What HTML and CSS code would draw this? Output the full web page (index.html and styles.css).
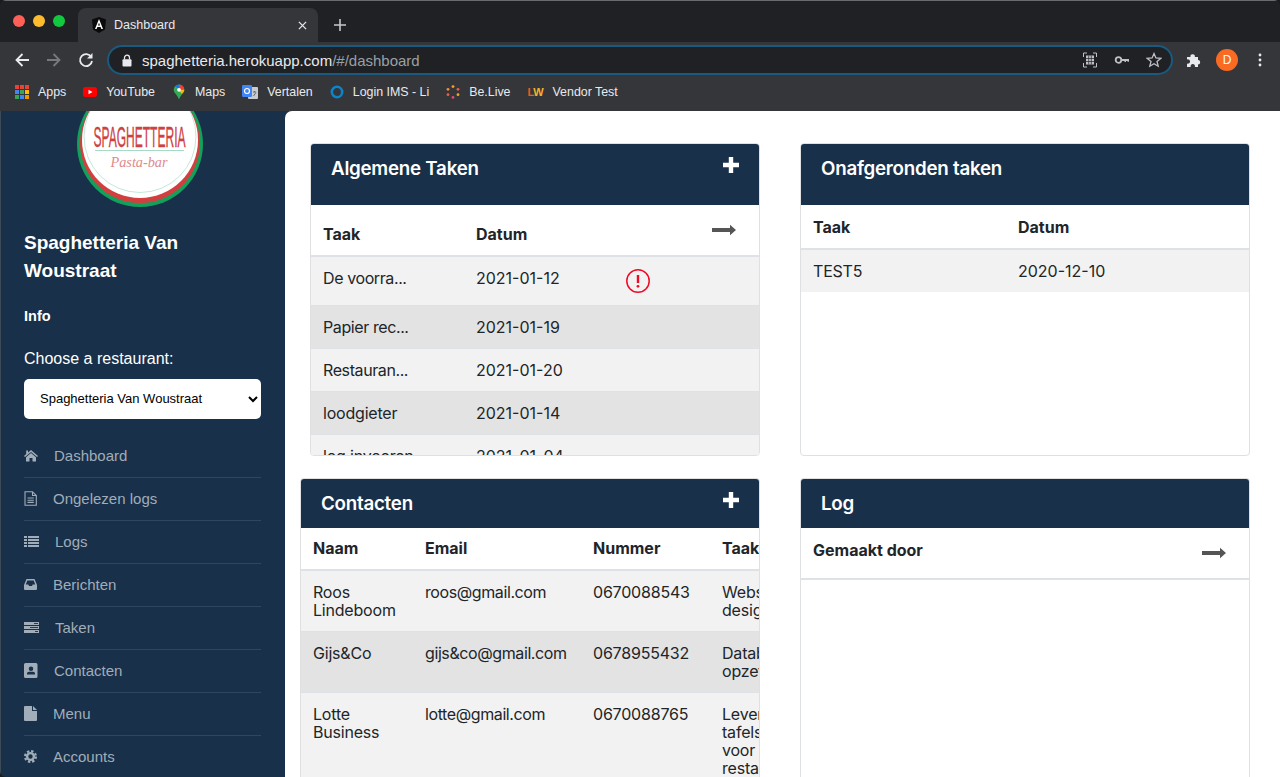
FILE: index.html
```html
<!DOCTYPE html>
<html lang="en">
<head>
<meta charset="utf-8">
<title>Dashboard</title>
<link rel="stylesheet" href="styles.css">
</head>
<body>
<div class="window">
  <div class="tabstrip">
    <div class="lights"><span class="light red"></span><span class="light yellow"></span><span class="light green"></span></div>
    <div class="tab">
      <svg class="favicon" viewBox="0 0 14 16"><polygon points="7,0 14,2.5 13,12.5 7,16 1,12.5 0,2.5" fill="#0a0a0a"/><path d="M7 2 L11 12 H9.4 L8.6 10 H5.4 L4.6 12 H3 Z M6 8.5 H8 L7 5.8 Z" fill="#fff" fill-rule="evenodd"/></svg>
      <span class="tab-title">Dashboard</span>
      <svg class="tab-close" viewBox="0 0 10 10"><path d="M1 1 L9 9 M9 1 L1 9" stroke="#e8eaed" stroke-width="1.4"/></svg>
    </div>
    <svg class="newtab" viewBox="0 0 14 14"><path d="M7 1 V13 M1 7 H13" stroke="#c4c7cc" stroke-width="1.6"/></svg>
  </div>
  <div class="toolbar">
    <svg class="tool tool-back" viewBox="0 0 16 16"><path d="M15 8 H2.5 M8.5 2 L2.5 8 L8.5 14" fill="none" stroke="#e8eaed" stroke-width="1.8"/></svg>
    <svg class="tool tool-fwd" viewBox="0 0 16 16"><path d="M1 8 H13.5 M7.5 2 L13.5 8 L7.5 14" fill="none" stroke="#77797d" stroke-width="1.8"/></svg>
    <svg class="tool tool-reload" viewBox="0 0 16 16"><path d="M13.2 5 A6 6 0 1 0 14 9" fill="none" stroke="#e8eaed" stroke-width="1.8"/><path d="M14.5 1 V6.5 H9 Z" fill="#e8eaed"/></svg>
    <div class="omnibox">
      <svg class="lock" viewBox="0 0 10 13"><path d="M2.5 5.5 V3.7 A2.5 2.5 0 0 1 7.5 3.7 V5.5" fill="none" stroke="#e8eaed" stroke-width="1.3"/><rect x="0.5" y="5.2" width="9" height="7.3" rx="1" fill="#e8eaed"/></svg>
      <span class="url"><span class="url-host">spaghetteria.herokuapp.com</span><span class="url-path">/#/dashboard</span></span>
      <svg class="omni-icon" viewBox="0 0 16 16"><path d="M5 1 H1.5 V5 M11 1 H14.5 V5 M5 15 H1.5 V11 M11 15 H14.5 V11" fill="none" stroke="#bdc1c6" stroke-width="1"/><rect x="4" y="3.5" width="8" height="9" fill="#bdc1c6"/><path d="M4 6.5 H12 M4 9.5 H12 M6.7 3.5 V12.5 M9.3 3.5 V12.5" stroke="#202124" stroke-width=".7"/></svg>
      <svg class="omni-icon" viewBox="0 0 16 16"><circle cx="4.5" cy="8" r="2.8" fill="none" stroke="#bdc1c6" stroke-width="1.8"/><path d="M7 7 H15 V9.8 H13.5 V9 H12 V10 H10.5 V9 H7 Z" fill="#bdc1c6"/></svg>
      <svg class="omni-icon" viewBox="0 0 16 16"><path d="M8 1.6 L9.9 6 L14.7 6.4 L11 9.5 L12.2 14.2 L8 11.7 L3.8 14.2 L5 9.5 L1.3 6.4 L6.1 6 Z" fill="none" stroke="#bdc1c6" stroke-width="1.3"/></svg>
    </div>
    <svg class="tool tool-ext" viewBox="0 0 16 16"><path d="M1 5 H4.5 A2.2 2.2 0 1 1 8.8 5 H12 V8 A2.2 2.2 0 1 1 12 12.4 V15 H8.8 A2.2 2.2 0 1 0 4.8 15 H1 V11.5 A2.2 2.2 0 1 0 1 7.5 Z" fill="#e8eaed"/></svg>
    <span class="avatar">D</span>
    <svg class="tool tool-menu" viewBox="0 0 4 16"><circle cx="2" cy="3" r="1.4" fill="#e8eaed"/><circle cx="2" cy="8" r="1.4" fill="#e8eaed"/><circle cx="2" cy="13" r="1.4" fill="#e8eaed"/></svg>
  </div>
  <div class="bookmarks">
    <a class="bm">
      <svg class="bm-icon" viewBox="0 0 14 14"><rect width="4" height="4" fill="#ea4335"/><rect x="5" width="4" height="4" fill="#ea4335"/><rect x="10" width="4" height="4" fill="#ea4335"/><rect y="5" width="4" height="4" fill="#4285f4"/><rect x="5" y="5" width="4" height="4" fill="#34a853"/><rect x="10" y="5" width="4" height="4" fill="#fbbc05"/><rect y="10" width="4" height="4" fill="#34a853"/><rect x="5" y="10" width="4" height="4" fill="#4285f4"/><rect x="10" y="10" width="4" height="4" fill="#f29900"/></svg>
      <span>Apps</span>
    </a>
    <a class="bm">
      <svg class="bm-icon" viewBox="0 0 14 14"><rect y="2" width="14" height="10" rx="2.5" fill="#f00"/><path d="M5.5 4.8 L9.5 7 L5.5 9.2 Z" fill="#fff"/></svg>
      <span>YouTube</span>
    </a>
    <a class="bm">
      <svg class="bm-icon bm-tall" viewBox="0 0 14 16"><path d="M7 0.5 A5.3 5.3 0 0 1 12.3 5.8 C12.3 9 8.5 11 7 15.5 C5.5 11 1.7 9 1.7 5.8 A5.3 5.3 0 0 1 7 0.5 Z" fill="#34a853"/><path d="M3 2.2 A5.3 5.3 0 0 1 7 0.5 L7 5 Z" fill="#1a73e8"/><path d="M7 0.5 A5.3 5.3 0 0 1 12.3 5.8 L7 5.5 Z" fill="#ea4335"/><path d="M12.3 5.8 C12.3 7.5 11 8.7 9.8 10 L7 6 Z" fill="#fbbc05"/><circle cx="7" cy="5.8" r="1.9" fill="#fff"/></svg>
      <span>Maps</span>
    </a>
    <a class="bm">
      <svg class="bm-icon bm-wide" viewBox="0 0 16 16"><rect x="6" y="3" width="10" height="12" rx="1" fill="#c7ccd1"/><rect y="1" width="10" height="12" rx="1.2" fill="#4285f4"/><circle cx="5" cy="7" r="2.5" fill="none" stroke="#fff" stroke-width="1.2"/><path d="M11 8 H14 M12.5 7 V8 M11.5 12 L14 8.5" stroke="#5f6368" stroke-width=".9" fill="none"/></svg>
      <span>Vertalen</span>
    </a>
    <a class="bm">
      <svg class="bm-icon" viewBox="0 0 14 14"><circle cx="7" cy="7" r="5.2" fill="none" stroke="#0b84c8" stroke-width="2.6"/></svg>
      <span>Login IMS - Li</span>
    </a>
    <a class="bm">
      <svg class="bm-icon" viewBox="0 0 14 14"><circle cx="7" cy="1.6" r="1.4" fill="#f5a524"/><circle cx="2" cy="4.3" r="1.4" fill="#f08c3a"/><circle cx="12" cy="4.3" r="1.4" fill="#ef5a4d"/><circle cx="2" cy="9.7" r="1.4" fill="#ef5a4d"/><circle cx="12" cy="9.7" r="1.4" fill="#f5a524"/><circle cx="7" cy="12.4" r="1.4" fill="#e64a6b"/></svg>
      <span>Be.Live</span>
    </a>
    <a class="bm">
      <span class="lw"><span class="lw-l">L</span><span class="lw-w">W</span></span>
      <span>Vendor Test</span>
    </a>
  </div>
  <div class="app">
    <aside class="sidebar">
      <svg class="logo" viewBox="0 0 126 126">
        <circle cx="63" cy="63" r="63" fill="#12a05c"/>
        <circle cx="63" cy="62" r="60" fill="#d1403f"/>
        <circle cx="63" cy="59" r="58" fill="#fff"/>
        <circle cx="63" cy="55.500" r="56" fill="none" stroke="#a7dcc7" stroke-width=".7"/>
        <text class="logo-name" x="62.500" y="66" text-anchor="middle" textLength="92" lengthAdjust="spacingAndGlyphs">SPAGHETTERIA</text>
        <path d="M18 69.500 H107" stroke="#8fd0b5" stroke-width=".8"/>
        <text class="logo-sub" x="62" y="86" text-anchor="middle" textLength="57" lengthAdjust="spacingAndGlyphs">Pasta-bar</text>
      </svg>
      <h1 class="brand">Spaghetteria Van Woustraat</h1>
      <p class="info">Info</p>
      <label class="choose" for="restaurant">Choose a restaurant:</label>
      <select class="restaurant" id="restaurant"><option>Spaghetteria Van Woustraat</option></select>
      <nav class="nav">
        <a class="nav-item"><svg class="ni ni-14" viewBox="0 0 14 12"><path d="M7 0.500 L14 6.500 L13 7.500 L7 2.600 L1 7.500 L0 6.500 L2.200 4.600 V1 H4 V3 Z M7 3.600 L12 7.700 V12 H8.500 V8.500 H5.500 V12 H2 V7.700 Z" fill="currentColor"/></svg><span>Dashboard</span></a>
        <a class="nav-item"><svg class="ni ni-13" viewBox="0 0 13 15"><path d="M1 .7 H8.500 L12.300 4.500 V14.300 H1 Z M8.500 .7 V4.500 H12.300 M3.500 7 H9.800 M3.500 9.200 H9.800 M3.500 11.400 H9.800" fill="none" stroke="currentColor" stroke-width="1.100"/></svg><span>Ongelezen logs</span></a>
        <a class="nav-item"><svg class="ni ni-15" viewBox="0 0 15 11"><path d="M0 0 H3 V2 H0 Z M4 0 H15 V2 H4 Z M0 3 H3 V5 H0 Z M4 3 H15 V5 H4 Z M0 6 H3 V8 H0 Z M4 6 H15 V8 H4 Z M0 9 H3 V11 H0 Z M4 9 H15 V11 H4 Z" fill="currentColor"/></svg><span>Logs</span></a>
        <a class="nav-item"><svg class="ni ni-13" viewBox="0 0 13 11"><path d="M2.500 0 H10.500 L13 6 V10 Q13 11 12 11 H1 Q0 11 0 10 V6 Z M3.300 1.500 L1.800 5.500 H4.300 L5 7 H8 L8.700 5.500 H11.200 L9.700 1.500 Z" fill="currentColor" fill-rule="evenodd"/></svg><span>Berichten</span></a>
        <a class="nav-item"><svg class="ni ni-15" viewBox="0 0 15 11"><path d="M0 0 H15 V3 H0 Z M0 4 H15 V7 H0 Z M0 8 H15 V11 H0 Z" fill="currentColor"/><path d="M10 1.500 H14 M6 5.500 H14 M11 9.500 H14" stroke="#183049" stroke-width=".9"/></svg><span>Taken</span></a>
        <a class="nav-item"><svg class="ni ni-14" viewBox="0 0 14 15"><path d="M1.500 0 H12 Q13.500 0 13.500 1.500 V13.500 Q13.500 15 12 15 H1.500 Q0 15 0 13.500 V1.500 Q0 0 1.500 0 Z M7 3.500 A2.200 2.200 0 1 0 7 8 A2.200 2.200 0 1 0 7 3.500 Z M3 11.500 H11 V10.500 Q11 8.700 9 8.700 H5 Q3 8.700 3 10.500 Z" fill="currentColor" fill-rule="evenodd"/></svg><span>Contacten</span></a>
        <a class="nav-item"><svg class="ni ni-13" viewBox="0 0 13 15"><path d="M0 1 Q0 0 1 0 H8 V5 H13 V14 Q13 15 12 15 H1 Q0 15 0 14 Z M9 0 L13 4 H9 Z" fill="currentColor"/></svg><span>Menu</span></a>
        <a class="nav-item"><svg class="ni ni-13" viewBox="0 0 13 13"><circle cx="6.500" cy="6.500" r="3.400" fill="none" stroke="currentColor" stroke-width="2.400"/><circle cx="6.500" cy="6.500" r="5.400" fill="none" stroke="currentColor" stroke-width="2.200" stroke-dasharray="2.400 1.840"/></svg><span>Accounts</span></a>
      </nav>
    </aside>
    <main class="main">
      <div class="board">
        <section class="card card-short card-inset">
          <header class="card-head head-tall">
            <h2>Algemene Taken</h2>
            <svg class="plus" viewBox="0 0 16 16"><path d="M8 0 V16 M0 8 H16" stroke="#fff" stroke-width="4.400"/></svg>
          </header>
          <table class="tbl tbl-tasks">
            <colgroup><col class="c-153"><col class="c-150"><col class="c-80"><col></colgroup>
            <thead><tr><th>Taak</th><th>Datum</th><th></th><th class="arrow-cell"><svg class="arrow" viewBox="0 0 24 26"><path d="M0 11 H18 V7.700 L24 13 L18 18.300 V15 H0 Z" fill="#555"/></svg></th></tr></thead>
            <tbody>
              <tr><td class="t-tight">De voorra...</td><td class="t-date">2021-01-12</td><td><svg class="alert" viewBox="0 0 24 24"><circle cx="12" cy="12" r="11.200" fill="none" stroke="#f00a24" stroke-width="1.500"/><path d="M12 6 V14" stroke="#f00a24" stroke-width="2.400"/><circle cx="12" cy="17.300" r="1.400" fill="#f00a24"/></svg></td><td></td></tr>
              <tr><td class="t-tight">Papier rec...</td><td class="t-date">2021-01-19</td><td></td><td></td></tr>
              <tr><td class="t-tight">Restauran...</td><td class="t-date">2021-01-20</td><td></td><td></td></tr>
              <tr><td>loodgieter</td><td class="t-date">2021-01-14</td><td></td><td></td></tr>
              <tr><td>log invoeren</td><td class="t-date">2021-01-04</td><td></td><td></td></tr>
            </tbody>
          </table>
        </section>
        <section class="card card-short">
          <header class="card-head head-tall"><h2>Onafgeronden taken</h2></header>
          <table class="tbl tbl-open">
            <colgroup><col class="c-205"><col></colgroup>
            <thead><tr><th>Taak</th><th>Datum</th></tr></thead>
            <tbody><tr><td>TEST5</td><td class="t-date">2020-12-10</td></tr></tbody>
          </table>
        </section>
        <section class="card card-long">
          <header class="card-head">
            <h2>Contacten</h2>
            <svg class="plus" viewBox="0 0 16 16"><path d="M8 0 V16 M0 8 H16" stroke="#fff" stroke-width="4.400"/></svg>
          </header>
          <table class="tbl tbl-contacts">
            <colgroup><col class="c-112"><col class="c-168"><col class="c-129"><col class="c-96"></colgroup>
            <thead><tr><th>Naam</th><th>Email</th><th>Nummer</th><th>Taak</th></tr></thead>
            <tbody>
              <tr><td>Roos Lindeboom</td><td class="t-tight">roos@gmail.com</td><td>0670088543</td><td>Website design</td></tr>
              <tr><td>Gijs&amp;Co</td><td class="t-tight">gijs&amp;co@gmail.com</td><td>0678955432</td><td>Database opzetten</td></tr>
              <tr><td>Lotte Business</td><td class="t-tight">lotte@gmail.com</td><td>0670088765</td><td>Leveren tafels voor restaurant</td></tr>
            </tbody>
          </table>
        </section>
        <section class="card card-long">
          <header class="card-head"><h2>Log</h2></header>
          <table class="tbl tbl-log">
            <thead><tr><th>Gemaakt door</th><th class="arrow-cell"><svg class="arrow" viewBox="0 0 24 26"><path d="M0 11 H18 V7.700 L24 13 L18 18.300 V15 H0 Z" fill="#555"/></svg></th></tr></thead>
          </table>
        </section>
      </div>
    </main>
  </div>
</div>
</body>
</html>
```
FILE: styles.css
```css
* { box-sizing: border-box; }
html, body { margin: 0; height: 100%; overflow: hidden; background: #1c1c1e; }
body { font-family: "Liberation Sans", Arial, sans-serif; }
.window { width: 1280px; height: 777px; display: flex; flex-direction: column; overflow: hidden; border-radius: 6px 6px 0 6px; }

/* browser chrome */
.tabstrip { height: 42px; flex: none; background: #202124; border-top: 1px solid #6a6b6e; display: flex; align-items: flex-end; padding-left: 13px; }
.lights { display: flex; gap: 8px; align-self: flex-start; margin-top: 14px; }
.light { width: 12px; height: 12px; border-radius: 50%; }
.red { background: #fe5f57; }
.yellow { background: #febb2e; }
.green { background: #11c83f; }
.tab { width: 240px; height: 34px; margin-left: 13px; background: #35363a; border-radius: 8px 8px 0 0; display: flex; align-items: center; padding: 0 11px 0 14px; color: #e8eaed; font-size: 12px; }
.favicon { width: 14px; height: 16px; flex: none; }
.tab-title { margin-left: 8px; flex: 1; font-size: 12.500px; }
.tab-close { width: 9px; height: 9px; flex: none; }
.newtab { width: 14px; height: 14px; margin: 0 0 10px 15px; }
.toolbar { height: 36px; flex: none; background: #35363a; display: flex; align-items: center; padding-left: 14px; }
.tool { flex: none; }
.tool-back, .tool-fwd, .tool-reload { width: 16px; height: 16px; margin-right: 16px; }
.tool-reload { margin-right: 13px; }
.omnibox { width: 1066px; height: 30px; flex: none; border: 2px solid #1a5a80; border-radius: 15px; background: #202124; display: flex; align-items: center; padding: 0 9px 0 13px; }
.lock { width: 10px; height: 13px; flex: none; }
.url { flex: 1; margin-left: 10px; font-size: 15px; }
.url-host { color: #e8eaed; }
.url-path { color: #9aa0a6; }
.omni-icon { width: 16px; height: 16px; flex: none; margin-left: 16px; }
.tool-ext { width: 16px; height: 16px; margin-left: 13px; }
.avatar { width: 22px; height: 22px; flex: none; margin-left: 14px; border-radius: 50%; background: #f96a23; color: #fff; font-size: 12px; display: flex; align-items: center; justify-content: center; }
.tool-menu { width: 4px; height: 16px; margin-left: 20px; }
.bookmarks { height: 33px; flex: none; background: #35363a; display: flex; align-items: center; padding: 0 0 5px 15px; gap: 17px; color: #e8eaed; font-size: 12.400px; }
.bm { display: flex; align-items: center; gap: 9px; }
.bm-icon { width: 14px; height: 14px; flex: none; }
.bm-tall { height: 16px; }
.bm-wide { width: 16px; height: 16px; }
.lw { font-size: 11px; font-weight: 700; width: 16px; letter-spacing: -.5px; }
.lw-l { color: #f2591d; }
.lw-w { color: #f5b32c; }

/* app */
.app { flex: 1; min-height: 0; display: flex; background: #183049; }
.sidebar { width: 285px; flex: none; padding: 0 24px 0 23px; overflow: hidden; border-left: 1px solid #3c4a58; color: #fff; }
.logo { display: block; width: 126px; height: 126px; margin: -30px 0 0 53px; }
.logo-name { font-family: "Liberation Sans Narrow", "Liberation Sans", Arial, sans-serif; font-size: 30px; fill: #cf4042; stroke: #cf4042; stroke-width: .35px; }
.logo-sub { font-family: "Liberation Serif", serif; font-style: italic; font-size: 14px; fill: #e08a8d; }
.brand { margin: 22px 0 0; font-size: 19px; line-height: 28px; font-weight: 700; }
.info { margin: 21px 0 0; font-size: 14.500px; line-height: 20px; font-weight: 700; }
.choose { display: block; margin-top: 21px; font-size: 16px; line-height: 24px; }
.restaurant { display: block; width: 237px; height: 40px; margin-top: 8px; padding: 0 0 2px 12px; border: 0; border-radius: 5px; background-color: #fff; color: #000; font-family: "Liberation Sans", Arial, sans-serif; font-size: 13px; }
.nav { margin-top: 16px; }
.nav-item { height: 43px; padding-bottom: 2px; display: flex; align-items: center; gap: 16px; border-bottom: 1px solid #2f4560; color: #a1adb9; font-size: 15px; }
.nav-item:last-child { border-bottom: 0; }
.ni { flex: none; height: 15px; }
.ni-13 { width: 13px; }
.ni-14 { width: 14px; }
.ni-15 { width: 15px; }

/* main */
.main { flex: 1; min-width: 0; background: #fff; border-top-left-radius: 7px; overflow: hidden; padding: 32px 0 0 15px; font-family: Inter, "Liberation Sans", sans-serif; color: #212529; }
.board { display: grid; grid-template-columns: 460px 450px; column-gap: 40px; row-gap: 22px; grid-template-rows: 313px 400px; }
.card { border: 1px solid #dfe0e1; border-radius: 4px; overflow: hidden; background: #fff; }
.card-inset { margin-left: 10px; }
.card-long { border-bottom: 0; }
.card-head { height: 50px; margin: -1px -1px 0; background: #183049; color: #fff; display: flex; justify-content: space-between; padding: 13px 21px 0 21px; }
.head-tall { height: 62px; }
.card-head h2 { margin: 0; font-size: 18.750px; letter-spacing: -.25px; line-height: 26px; font-weight: 600; }
.plus { width: 16px; height: 16px; margin: 1px 0 0; }

/* tables */
.tbl { border-collapse: collapse; table-layout: fixed; width: 100%; font-size: 16px; line-height: 18px; }
.tbl th { padding: 12px; text-align: left; font-weight: 700; vertical-align: bottom; border-bottom: 2px solid #dee2e6; }
.tbl td { padding: 12px; vertical-align: top; border-top: 1px solid #dee2e6; letter-spacing: -.2px; }
.tbl .t-date { letter-spacing: 0; }
.tbl .t-tight { letter-spacing: -.4px; }
.tbl thead + tbody tr:first-child td { border-top: 0; }
.tbl tbody tr:nth-child(odd) { background: #f2f2f2; }
.tbl tbody tr:nth-child(even) { background: #e3e3e3; }
.c-153 { width: 153px; }
.c-150 { width: 150px; }
.c-80 { width: 80px; }
.c-205 { width: 205px; }
.c-112 { width: 112px; }
.c-168 { width: 168px; }
.c-129 { width: 129px; }
.c-96 { width: 96px; }
.tbl-contacts { width: 505px; }
.tbl-contacts th { padding: 11px 12px 12px; }
.tbl-open th { padding-top: 13px; }
.tbl-log th { vertical-align: top; padding-top: 13px; }
.tbl .arrow-cell { text-align: right; padding: 12px 23px 12px 12px; }
.arrow { display: block; width: 24px; height: 26px; margin-left: auto; }
.alert { display: block; width: 24px; height: 24px; }
```
